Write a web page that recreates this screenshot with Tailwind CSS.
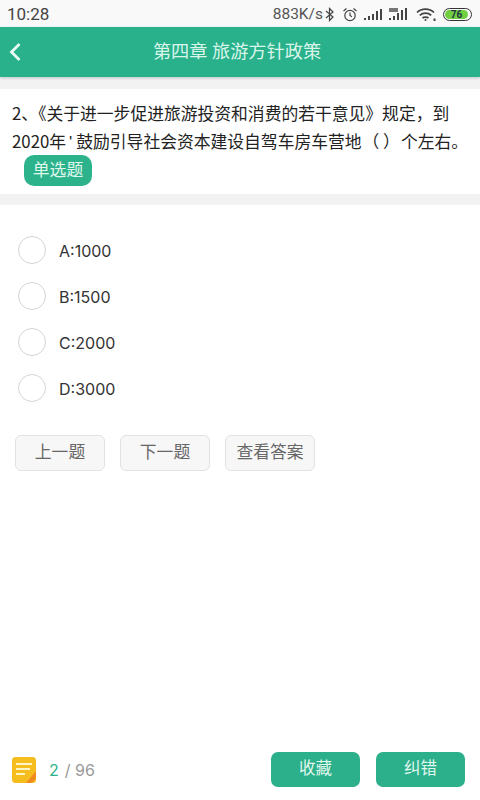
<!DOCTYPE html>
<html lang="zh">
<head>
<meta charset="utf-8">
<script src="https://cdn.jsdelivr.net/npm/@tailwindcss/browser@4"></script>
</head>
<body class="m-0 bg-white font-['Roboto','Noto_Sans_CJK_SC',sans-serif]">
<div class="relative flex h-[800px] w-[480px] flex-col overflow-hidden bg-white text-[#333]">
  <div class="flex h-[27px] items-center justify-between bg-[#f9f9f9] pl-[7px] pr-[8px] pt-[2px] text-[#444]">
    <span class="text-[17px] leading-none">10:28</span>
    <div class="flex items-center">
      <span class="text-[15.5px] leading-none text-[#555]">883K/s</span>
      <svg class="ml-[1px]" width="11" height="15" viewBox="0 0 11 15" fill="none" stroke="#444" stroke-width="1.2"><path d="M2 4l7 6-3.5 3.5V1.5L9 5l-7 6"/></svg>
      <svg class="ml-[7px]" width="16" height="15" viewBox="0 0 16 15" fill="none" stroke="#444" stroke-width="1.2"><circle cx="8" cy="8.5" r="5.2"/><path d="M8 5.5v3l2 1.2M1.5 4l3-2.5M14.500 4l-3-2.500"/></svg>
      <svg class="ml-[6px]" width="19" height="13" viewBox="0 0 19 13" fill="#444"><rect x="0" y="10" width="2" height="2"/><rect x="4" y="8" width="2" height="4"/><rect x="8" y="6" width="2" height="6"/><rect x="12" y="3" width="2" height="9"/><rect x="16" y="1" width="2" height="11"/></svg>
      <svg class="ml-[6px]" width="18" height="15" viewBox="0 0 18 15" fill="#444"><rect x="0" y="11" width="2" height="2"/><rect x="4" y="9" width="2" height="4"/><rect x="8" y="6" width="2" height="7"/><rect x="12" y="3" width="2" height="10"/><rect x="16" y="1" width="2" height="12"/><rect x="0" y="1" width="9" height="4" fill="#777"/></svg>
      <svg class="ml-[9px]" width="21" height="15" viewBox="0 0 21 15" fill="none" stroke="#444" stroke-width="1.7"><path d="M1 5.500C5.500 1 13.500 1 18 5.500M3.800 8.300C6.800 5.500 12.200 5.500 15.200 8.300M6.500 11C8 9.700 11 9.700 12.500 11"/><circle cx="9.500" cy="13" r="1" fill="#444" stroke="none"/><rect x="17.500" y="11.500" width="2" height="2.500" fill="#444" stroke="none"/></svg>
      <div class="relative ml-[6px] flex h-[13px] w-[29px] items-center rounded-full border border-[#333] p-[1px]">
        <div class="flex h-full w-[23px] items-center justify-center rounded-full bg-[#6fcf3f] text-[10px] font-bold leading-none text-[#234]">76</div>
      </div>
    </div>
  </div>

  <header class="relative flex h-[50px] items-center justify-center bg-[#28b18a] pr-[6px] pt-[1px] shadow-[0_1px_3px_rgba(0,0,0,0.2)]">
    <svg class="absolute left-[8px] top-[15px]" width="14" height="20" viewBox="0 0 14 20" fill="none" stroke="#e8fbf4" stroke-width="2.800"><path d="M11.500 2L3.500 10l8 8"/></svg>
    <h1 class="text-[18.200px] font-normal leading-none text-[#d9f5ea]">第四章 旅游方针政策</h1>
  </header>

  <div class="h-[12px] bg-[#f2f2f2]"></div>

  <section class="px-[12px] pt-[10px] font-['Noto_Sans_CJK_SC',sans-serif] text-[16.800px] leading-[28px] text-[#222]">
    <p class="h-[28px] whitespace-nowrap">2、《关于进一步促进旅游投资和消费的若干意见》规定，到</p>
    <p class="h-[28px] whitespace-nowrap">2020年<span class="ml-[3px] mr-[4px] font-['Liberation_Sans',sans-serif] leading-none">'</span>鼓励引导社会资本建设自驾车房车营地<span class="mx-[1px]">（ ）</span>个左右。</p>
  </section>
  <div class="ml-[24px] flex h-[31px] w-[68px] items-center justify-center rounded-[10px] bg-[#2cb38c] text-[16.800px] leading-none text-[#e0f7ee]">单选题</div>

  <div class="mt-[8px] h-[11px] bg-[#f2f2f2]"></div>

  <ul class="flex flex-col gap-[18px] pl-[18px] pt-[31px] font-['Inter',sans-serif] text-[16px] leading-none text-[#333]">
    <li class="flex h-[28px] items-center gap-[13px]"><span class="size-[28px] rounded-full border-[1.500px] border-[#d4d4d4]"></span><span class="pt-[2px]">A:1000</span></li>
    <li class="flex h-[28px] items-center gap-[13px]"><span class="size-[28px] rounded-full border-[1.500px] border-[#d4d4d4]"></span><span class="pt-[2px]">B:1500</span></li>
    <li class="flex h-[28px] items-center gap-[13px]"><span class="size-[28px] rounded-full border-[1.500px] border-[#d4d4d4]"></span><span class="pt-[2px]">C:2000</span></li>
    <li class="flex h-[28px] items-center gap-[13px]"><span class="size-[28px] rounded-full border-[1.500px] border-[#d4d4d4]"></span><span class="pt-[2px]">D:3000</span></li>
  </ul>

  <div class="mt-[33px] flex gap-[15px] pl-[15px]">
    <button class="h-[36px] w-[90px] rounded-[6px] border border-[#e2e2e2] bg-[#f7f7f7] text-[16.800px] text-[#666]">上一题</button>
    <button class="h-[36px] w-[90px] rounded-[6px] border border-[#e2e2e2] bg-[#f7f7f7] text-[16.800px] text-[#666]">下一题</button>
    <button class="h-[36px] w-[90px] rounded-[6px] border border-[#e2e2e2] bg-[#f7f7f7] text-[16.800px] text-[#666]">查看答案</button>
  </div>

  <footer class="mb-[13px] mt-auto flex h-[35px] items-center pl-[12px] pr-[15px]">
    <svg width="25" height="26" viewBox="0 0 25 26"><rect width="24" height="26" rx="3.500" fill="#f6bd1f"/><path d="M4 7h16M4 12h14M4 17h9" stroke="#fff4c4" stroke-width="2"/><path d="M24 14L14 26h3c4 0 7-3 7-7z" fill="#ef8a1e"/></svg>
    <span class="ml-[12px] font-['Inter',sans-serif] text-[16px] leading-none text-[#2cb38c]">2</span>
    <span class="ml-[6px] font-['Inter',sans-serif] text-[16px] leading-none text-[#999]">/ 96</span>
    <button class="ml-auto h-[35px] w-[89px] rounded-[7px] bg-[#2cb08b] text-[16.500px] text-[#e0f7ee]">收藏</button>
    <button class="ml-[16px] h-[35px] w-[89px] rounded-[7px] bg-[#2cb08b] text-[16.500px] text-[#e0f7ee]">纠错</button>
  </footer>
</div>
</body>
</html>
